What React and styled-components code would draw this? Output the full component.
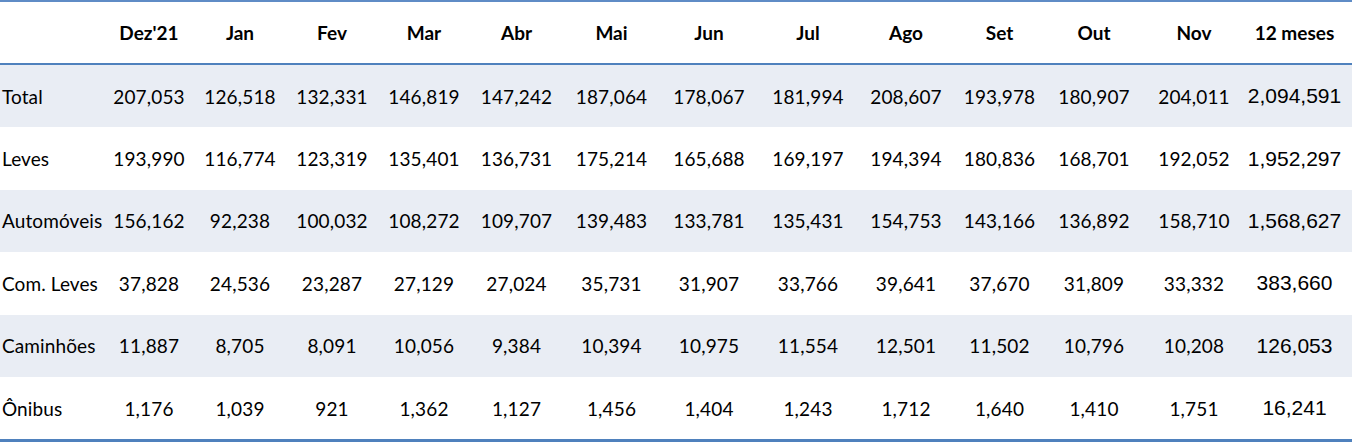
import React from "react";
import styled, { createGlobalStyle } from "styled-components";

const Global = createGlobalStyle`
  html, body { margin: 0; padding: 0; background: #ffffff; }
  body { font-family: Lato, "Open Sans", sans-serif; color: #000; }
`;

const widths = [104, 90, 92, 92, 92, 93, 97, 98, 100, 96, 91, 98, 102, 107];
const cols = widths.map((w) => `${w}px`).join(" ");

const Table = styled.div`
  width: 1352px;
  border-top: 2px solid #5f8cc6;
  border-bottom: 3px solid #4f81bd;
`;

const HeaderRow = styled.div`
  display: grid;
  grid-template-columns: ${cols};
  height: 61px;
  align-items: center;
  border-bottom: 2px solid #4f81bd;
  box-shadow: 0 1px 0 #a9c0e0;
`;

const Row = styled.div`
  display: grid;
  grid-template-columns: ${cols};
  height: 62.4px;
  align-items: center;
  background: ${(p) => (p.$band ? "#e9edf4" : "#ffffff")};
`;

const HeadCell = styled.div`
  font-family: Lato, sans-serif;
  font-weight: 700;
  font-size: 19px;
  text-align: center;
  white-space: nowrap;
  padding-right: ${(p) => (p.$last ? "8px" : "0")};
`;

const Label = styled.div`
  font-family: Lato, sans-serif;
  font-size: 19px;
  padding-left: 2px;
  white-space: nowrap;
  letter-spacing: 0.1px;
`;

const Num = styled.div`
  font-family: Lato, sans-serif;
  font-size: 19px;
  text-align: center;
  white-space: nowrap;
  letter-spacing: 0.15px;
`;

const Total = styled.div`
  font-family: "Liberation Sans", Arial, sans-serif;
  font-size: 21px;
  text-align: center;
  white-space: nowrap;
  padding-right: 8px;
`;

const months = ["Dez'21", "Jan", "Fev", "Mar", "Abr", "Mai", "Jun", "Jul", "Ago", "Set", "Out", "Nov", "12 meses"];

const data = [
  ["Total", "207,053", "126,518", "132,331", "146,819", "147,242", "187,064", "178,067", "181,994", "208,607", "193,978", "180,907", "204,011", "2,094,591"],
  ["Leves", "193,990", "116,774", "123,319", "135,401", "136,731", "175,214", "165,688", "169,197", "194,394", "180,836", "168,701", "192,052", "1,952,297"],
  ["Automóveis", "156,162", "92,238", "100,032", "108,272", "109,707", "139,483", "133,781", "135,431", "154,753", "143,166", "136,892", "158,710", "1,568,627"],
  ["Com. Leves", "37,828", "24,536", "23,287", "27,129", "27,024", "35,731", "31,907", "33,766", "39,641", "37,670", "31,809", "33,332", "383,660"],
  ["Caminhões", "11,887", "8,705", "8,091", "10,056", "9,384", "10,394", "10,975", "11,554", "12,501", "11,502", "10,796", "10,208", "126,053"],
  ["Ônibus", "1,176", "1,039", "921", "1,362", "1,127", "1,456", "1,404", "1,243", "1,712", "1,640", "1,410", "1,751", "16,241"],
];

export default function App() {
  return (
    <>
      <Global />
      <Table>
        <HeaderRow>
          <HeadCell />
          {months.map((m, i) => (
            <HeadCell key={m} $last={i === months.length - 1}>{m}</HeadCell>
          ))}
        </HeaderRow>
        {data.map((r, i) => (
          <Row key={r[0]} $band={i % 2 === 0}>
            <Label>{r[0]}</Label>
            {r.slice(1, 13).map((v, j) => (
              <Num key={j}>{v}</Num>
            ))}
            <Total>{r[13]}</Total>
          </Row>
        ))}
      </Table>
    </>
  );
}
